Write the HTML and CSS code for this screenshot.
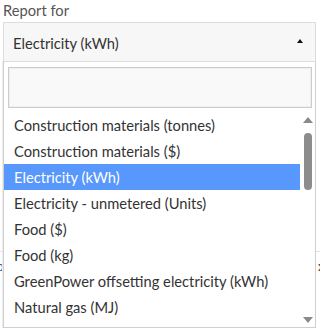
FILE: index.html
```html
<!DOCTYPE html>
<html>
<head>
<meta charset="utf-8">
<link rel="stylesheet" href="styles.css">
</head>
<body>
<div class="field">
  <div class="label">Report for</div>
  <div class="select">
    <div class="choice">
      <span class="choice-text">Electricity (kWh)</span>
      <span class="arrow"></span>
    </div>
    <div class="drop">
      <div class="search"><input class="search-input" type="text"></div>
      <div class="results">
        <ul class="list">
          <li class="opt">Construction materials (tonnes)</li>
          <li class="opt">Construction materials ($)</li>
          <li class="opt active">Electricity (kWh)</li>
          <li class="opt">Electricity - unmetered (Units)</li>
          <li class="opt">Food ($)</li>
          <li class="opt">Food (kg)</li>
          <li class="opt">GreenPower offsetting electricity (kWh)</li>
          <li class="opt">Natural gas (MJ)</li>
        </ul>
        <div class="scrollbar">
          <span class="sb-up"></span>
          <div class="sb-track"><span class="sb-thumb"></span></div>
          <span class="sb-down"></span>
        </div>
      </div>
    </div>
  </div>
  <div class="below">
    <div class="below-row"><span class="below-link">p</span><span class="below-x">x</span></div>
  </div>
</div>
</body>
</html>
```
FILE: styles.css
```css
* { box-sizing: border-box; }
html, body { margin: 0; padding: 0; background: #fff; }
body {
  font-family: "Lato", "Open Sans", sans-serif;
  font-size: 14.7px;
  color: #333;
  width: 320px;
  height: 332px;
  overflow: hidden;
}
.field { padding: 0 4px 0 3px; position: relative; }
.label {
  color: #555;
  font-size: 14.7px;
  line-height: 21px;
  height: 22px;
}
.select { position: relative; }
.choice {
  height: 40px;
  border: 1px solid #dcdcdc;
  background: #f7f7f7;
  display: flex;
  align-items: center;
  justify-content: space-between;
  padding: 1px 12px 0 9px;
}
.choice-text { color: #333; }
.arrow {
  width: 0; height: 0;
  border-left: 3px solid transparent;
  border-right: 3px solid transparent;
  border-bottom: 4px solid #111;
  margin-top: -4px;
}
.drop {
  position: absolute;
  left: 0; right: 0; top: 39px;
  height: 267px;
  background: #fff;
  border: 1px solid #cfcfcf;
  border-top-color: #dcdcdc;
  box-shadow: -1px 0 0 #ececec;
  z-index: 2;
  display: flex;
  flex-direction: column;
}
.search { padding: 5px 3px 4px 4px; }
.search-input {
  display: block;
  width: 100%;
  height: 41px;
  border: 1px solid #cccccc;
  background: #f9f9f9;
  box-shadow: inset 0 0 0 1px #efefef;
  outline: none;
  margin: 0;
}
.results {
  flex: 1;
  display: flex;
  overflow: hidden;
}
.list {
  list-style: none;
  margin: 0; padding: 0;
  flex: 1;
  overflow: hidden;
}
.opt {
  height: 26px;
  line-height: 26px;
  padding-left: 10px;
  white-space: nowrap;
  color: #333;
}
.opt.active { background: #5897fb; color: #fff; }
.scrollbar {
  width: 15px;
  display: flex;
  flex-direction: column;
  align-items: center;
  padding: 5px 0 4px;
}
.sb-up, .sb-down {
  width: 0; height: 0;
  border-left: 5px solid transparent;
  border-right: 5px solid transparent;
}
.sb-up { border-bottom: 6px solid #8a8a8a; }
.sb-down { border-top: 6px solid #8a8a8a; }
.sb-track { flex: 1; width: 100%; display: flex; justify-content: center; padding-top: 10px; }
.sb-thumb {
  display: block;
  width: 8px;
  height: 57px;
  border-radius: 4px;
  background: #8c8c8c;
}
.below { position: relative; margin-top: 189px; margin-left: -3px; margin-right: -4px; }
.below-row {
  border-top: 1px solid #e3e3e3;
  height: 26px;
  display: flex;
  justify-content: space-between;
  align-items: flex-end;
  font-size: 14px;
  line-height: 18px;
  padding-bottom: 2px;
}
.below-link { color: #2a6ebb; margin-left: -4px; }
.below-x { color: #333; margin-right: -5px; }
```
